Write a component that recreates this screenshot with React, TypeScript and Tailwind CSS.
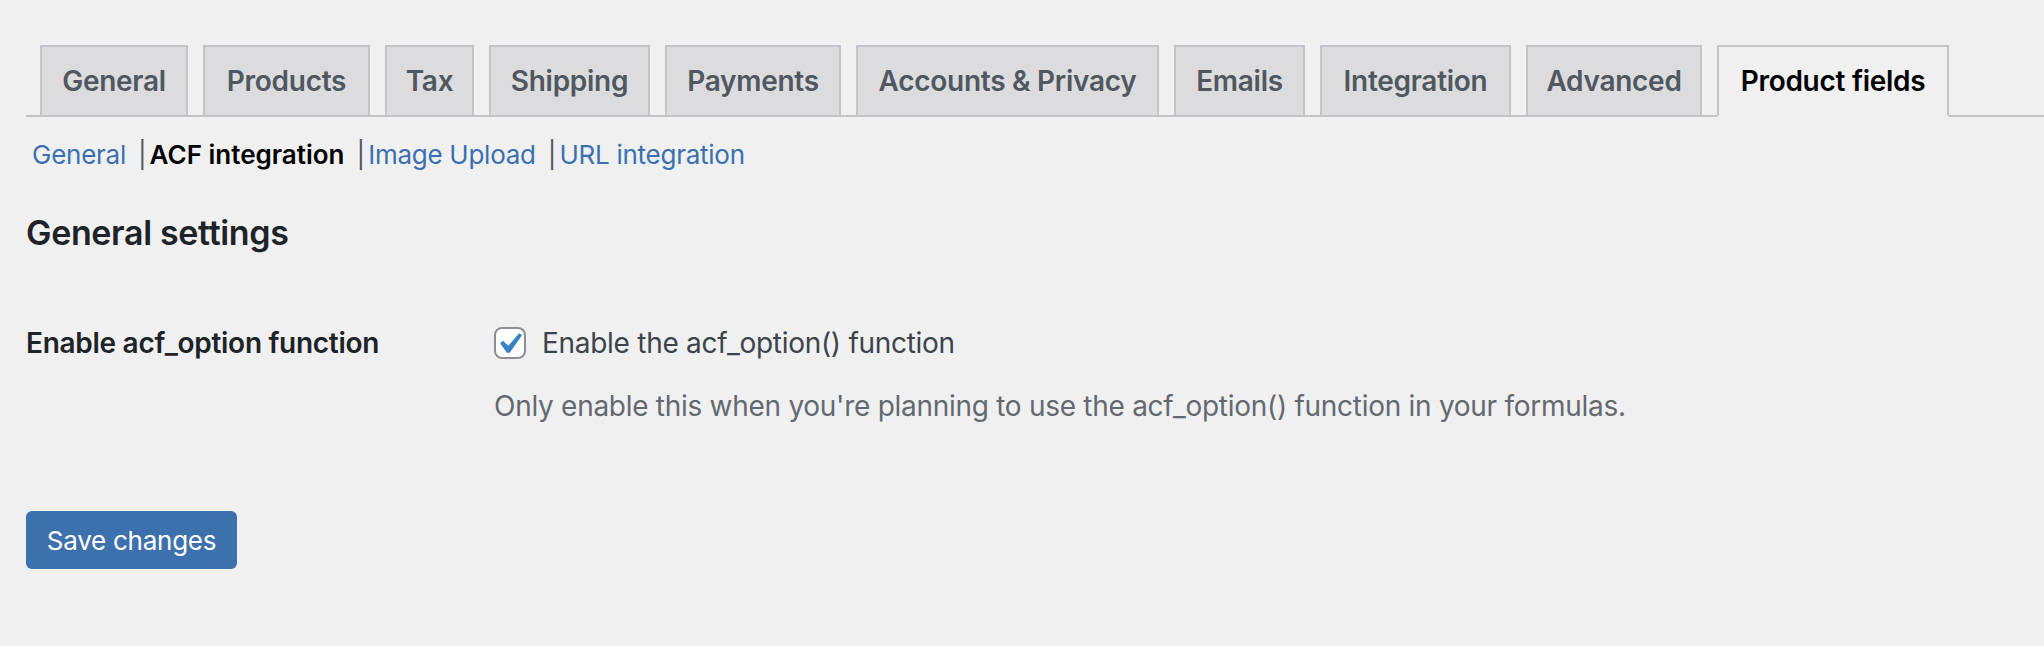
import React from 'react';

const tabs = [
  { label: 'General', w: 'w-[148px]' },
  { label: 'Products', w: 'w-[167px]' },
  { label: 'Tax', w: 'w-[89px]' },
  { label: 'Shipping', w: 'w-[161px]' },
  { label: 'Payments', w: 'w-[176px]' },
  { label: 'Accounts & Privacy', w: 'w-[303px]' },
  { label: 'Emails', w: 'w-[131px]' },
  { label: 'Integration', w: 'w-[191px]' },
  { label: 'Advanced', w: 'w-[176px]' },
  { label: 'Product fields', w: 'w-[232px]', active: true },
];

const sections = [
  { label: 'General' },
  { label: 'ACF integration', current: true },
  { label: 'Image Upload' },
  { label: 'URL integration' },
];

function App() {
  return (
    <div className="min-h-screen bg-[#f0f0f1] font-['Inter',sans-serif] pl-[26px] pt-[45px]">
      {/* Tabs */}
      <nav className="flex items-end gap-[15px] border-b-2 border-[#c3c4c7] pl-[14px]">
        {tabs.map((tab) => (
          <a
            key={tab.label}
            className={`${tab.w} -mb-[2px] flex h-[72px] items-center justify-center border-2 text-[28px] font-semibold tracking-[-0.01em] ${
              tab.active
                ? 'border-[#c3c4c7] border-b-[#f0f0f1] bg-[#f0f0f1] text-black'
                : 'border-[#c3c4c7] bg-[#dcdcde] text-[#50575e]'
            }`}
          >
            {tab.label}
          </a>
        ))}
      </nav>

      {/* Sub sections */}
      <ul className="mt-[12px] flex pl-[6px] text-[26px] leading-[52px]">
        {sections.map((s, i) => (
          <li key={s.label} className="flex">
            <a className={s.current ? 'font-semibold tracking-normal text-black' : 'tracking-[-0.01em] text-[#3a70af]'}>
              {s.label}
            </a>
            {i < sections.length - 1 && <span className="ml-[12px] mr-[3px] text-[#50575e]">|</span>}
          </li>
        ))}
      </ul>

      <h2 className="mt-[32px] text-[34px] font-semibold leading-[40px] tracking-[-0.01em] text-[#1d2327]">
        General settings
      </h2>

      {/* Form row */}
      <div className="mt-[70px] flex">
        <div className="w-[468px] text-[28px] font-semibold leading-[40px] tracking-[-0.01em] text-[#1d2327]">
          Enable acf_option function
        </div>
        <div>
          <label className="flex h-[40px] items-center gap-[16px] text-[28px] tracking-[-0.01em] text-[#3c434a]">
            <span className="flex h-[32px] w-[32px] items-center justify-center rounded-[8px] border-2 border-[#8c8f94] bg-white">
              <svg width="28" height="28" viewBox="3.81 2.86 13.33 13.33">
                <path d="M14.83 4.89l1.34.94-5.81 8.38H9.02L5.78 9.67l1.34-1.25 2.57 2.4z" fill="#3582c4" />
              </svg>
            </span>
            Enable the acf_option() function
          </label>
          <p className="mt-[23px] text-[28px] leading-[40px] tracking-[-0.01em] text-[#646970]">
            Only enable this when you're planning to use the acf_option() function in your formulas.
          </p>
        </div>
      </div>

      <button className="mt-[85px] flex h-[58px] w-[211px] items-center justify-center rounded-[6px] bg-[#3c71ad] text-[26px] tracking-[-0.01em] text-white">
        Save changes
      </button>
    </div>
  );
}

export default App;
